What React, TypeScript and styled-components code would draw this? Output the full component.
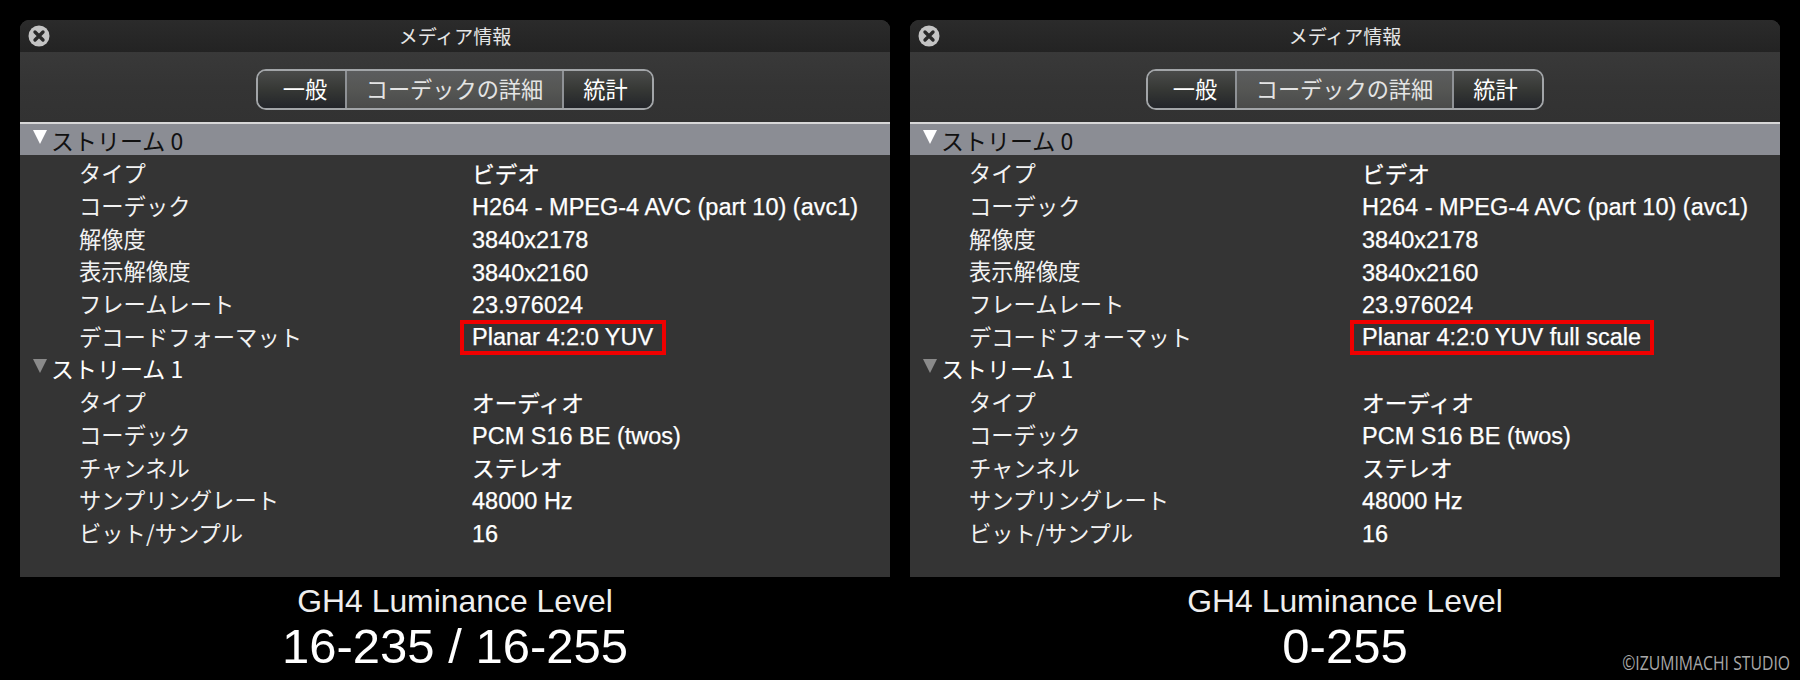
import React from 'react';
import styled, { createGlobalStyle } from 'styled-components';

const GlobalStyle = createGlobalStyle`
  html, body {
    margin: 0;
    padding: 0;
    background: #000;
  }
`;

const Page = styled.div`
  position: relative;
  width: 1800px;
  height: 680px;
  box-sizing: border-box;
  padding: 20px 20px 0;
  display: flex;
  gap: 20px;
  overflow: hidden;
  background: #000;
  font-family: 'Liberation Sans', 'Noto Sans CJK JP', sans-serif;
  color: #fff;
`;

const Column = styled.div`
  width: 870px;
  display: flex;
  flex-direction: column;
`;

const Panel = styled.div`
  height: 557px;
  background: #343434;
  border-radius: 9px 9px 0 0;
  overflow: hidden;
  display: flex;
  flex-direction: column;
`;

const TitleBar = styled.div`
  position: relative;
  height: 32px;
  box-sizing: border-box;
  padding-bottom: 2px;
  flex: none;
  background: linear-gradient(#2b2b2b, #232323);
  display: flex;
  align-items: center;
  justify-content: center;
  font-family: 'Noto Sans CJK JP', sans-serif;
  font-size: 19px;
  color: #e6e6e6;
`;

const CloseIcon = styled.svg`
  position: absolute;
  left: 8px;
  top: 5px;
`;

const Toolbar = styled.div`
  height: 70px;
  flex: none;
  box-sizing: border-box;
  padding-top: 17px;
  display: flex;
  justify-content: center;
  background: linear-gradient(#393939, #343434 50%, #323232);
`;

const Segments = styled.div`
  display: flex;
  height: 41px;
  box-sizing: border-box;
  border: 2px solid #a2a5a8;
  border-radius: 10px;
  overflow: hidden;
`;

const Segment = styled.div<{ $active?: boolean; $width: number; $left?: number; $right?: number }>`
  width: ${p => p.$width}px;
  box-sizing: border-box;
  display: flex;
  align-items: center;
  justify-content: center;
  padding: 0 ${p => p.$right ?? 0}px 3px ${p => p.$left ?? 0}px;
  font-family: 'Noto Sans CJK JP', sans-serif;
  font-size: 22.2px;
  color: ${p => (p.$active ? '#e4e4e4' : '#fff')};
  background: ${p =>
    p.$active
      ? 'linear-gradient(#5c5d5e, #555654 50%, #4a4b4a)'
      : 'linear-gradient(#4a4b4a, #363835 50%, #23252a)'};
  & + & {
    border-left: 2px solid #8f9296;
  }
`;

const StreamHeader = styled.div<{ $selected?: boolean }>`
  height: ${p => (p.$selected ? '33px' : '32.7px')};
  flex: none;
  box-sizing: border-box;
  display: flex;
  align-items: center;
  gap: 4px;
  padding: ${p => (p.$selected ? '0' : '2px')} 0 0 13px;
  font-family: 'Noto Sans CJK JP', sans-serif;
  font-size: 23px;
  color: ${p => (p.$selected ? '#111' : '#fff')};
  background: ${p => (p.$selected ? '#8b8d94' : 'transparent')};
  border-top: ${p => (p.$selected ? '2px solid #d8d8d8' : 'none')};
`;

const Triangle = styled.span<{ $selected?: boolean }>`
  width: 0;
  height: 0;
  border-left: 7.5px solid transparent;
  border-right: 7.5px solid transparent;
  border-top: 14px solid ${p => (p.$selected ? '#fff' : '#8a8a8a')};
  margin-top: -5px;
`;

const Row = styled.div`
  height: 32.7px;
  flex: none;
  box-sizing: border-box;
  display: flex;
  align-items: center;
  padding: 2px 0 0 59px;
`;

const Label = styled.div`
  width: 393px;
  flex: none;
  font-family: 'Noto Sans CJK JP', sans-serif;
  font-size: 22.3px;
  color: #f2f2f2;
`;

const Value = styled.div<{ $kana?: boolean }>`
  white-space: nowrap;
  line-height: 1;
  padding-top: 6px;
  font-size: ${p => (p.$kana ? '22.7px' : '23.5px')};
  -webkit-text-stroke: 0.25px #fff;
`;

const Highlight = styled.span`
  display: inline-block;
  box-sizing: border-box;
  height: 35px;
  line-height: 27px;
  margin: -2px 0 0 -12px;
  padding: 0 9px 0 8px;
  border: 4px solid #f00000;
`;

const Caption = styled.div`
  flex: 1;
  display: flex;
  flex-direction: column;
  align-items: center;
  padding-top: 6px;
`;

const CaptionTitle = styled.div`
  font-size: 31.9px;
  line-height: 36px;
  color: #eee;
`;

const CaptionRange = styled.div`
  font-size: 49px;
  line-height: 54px;
`;

const Copyright = styled.div`
  position: absolute;
  right: 10px;
  bottom: 7px;
  font-family: 'Open Sans', sans-serif;
  font-size: 20.5px;
  line-height: 22px;
  color: #a8a8a8;
  transform: scaleX(0.77);
  transform-origin: right center;
`;

type Item = [string, string];

const video = (format: string): Item[] => [
  ['タイプ', 'ビデオ'],
  ['コーデック', 'H264 - MPEG-4 AVC (part 10) (avc1)'],
  ['解像度', '3840x2178'],
  ['表示解像度', '3840x2160'],
  ['フレームレート', '23.976024'],
  ['デコードフォーマット', format],
];

const audio: Item[] = [
  ['タイプ', 'オーディオ'],
  ['コーデック', 'PCM S16 BE (twos)'],
  ['チャンネル', 'ステレオ'],
  ['サンプリングレート', '48000 Hz'],
  ['ビット/サンプル', '16'],
];

const Rows: React.FC<{ items: Item[]; format?: string }> = ({ items, format }) => (
  <>
    {items.map(([label, value]) => (
      <Row key={label}>
        <Label>{label}</Label>
        <Value $kana={/[ァ-ヶ]/.test(value)}>
          {value === format ? <Highlight>{value}</Highlight> : value}
        </Value>
      </Row>
    ))}
  </>
);

const MediaInfo: React.FC<{ format: string; range: string }> = ({ format, range }) => (
  <Column>
    <Panel>
      <TitleBar>
        <CloseIcon width="22" height="22" viewBox="0 0 22 22">
          <circle cx="11" cy="11" r="10.5" fill="#c4c4c4" />
          <path d="M7 7l8 8M15 7l-8 8" stroke="#2a2a2a" strokeWidth="3.4" strokeLinecap="round" />
        </CloseIcon>
        メディア情報
      </TitleBar>
      <Toolbar>
        <Segments>
          <Segment $width={87} $left={7}>一般</Segment>
          <Segment $width={217} $active>コーデックの詳細</Segment>
          <Segment $width={90} $right={5}>統計</Segment>
        </Segments>
      </Toolbar>
      <StreamHeader $selected>
        <Triangle $selected />
        ストリーム 0
      </StreamHeader>
      <Rows items={video(format)} format={format} />
      <StreamHeader>
        <Triangle />
        ストリーム 1
      </StreamHeader>
      <Rows items={audio} />
    </Panel>
    <Caption>
      <CaptionTitle>GH4 Luminance Level</CaptionTitle>
      <CaptionRange>{range}</CaptionRange>
    </Caption>
  </Column>
);

export default function App() {
  return (
    <Page>
      <GlobalStyle />
      <MediaInfo format="Planar 4:2:0 YUV" range="16-235 / 16-255" />
      <MediaInfo format="Planar 4:2:0 YUV full scale" range="0-255" />
      <Copyright>©IZUMIMACHI STUDIO</Copyright>
    </Page>
  );
}
